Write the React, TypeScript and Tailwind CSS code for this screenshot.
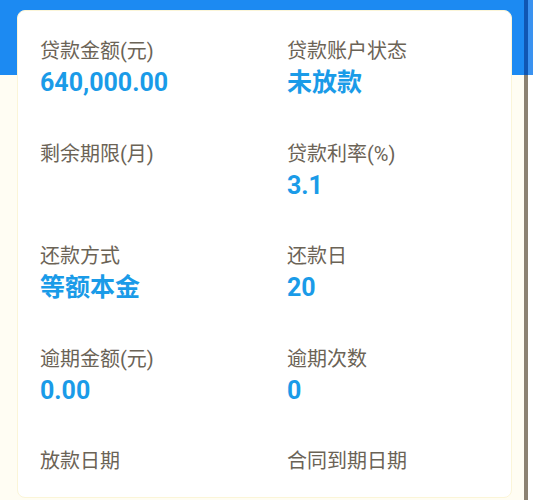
const rows: [string, string, string, string][] = [
  ["贷款金额(元)", "640,000.00", "贷款账户状态", "未放款"],
  ["剩余期限(月)", "", "贷款利率(%)", "3.1"],
  ["还款方式", "等额本金", "还款日", "20"],
  ["逾期金额(元)", "0.00", "逾期次数", "0"],
  ["放款日期", "", "合同到期日期", ""],
];

function Field({ label, value }: { label: string; value: string }) {
  return (
    <div className="flex flex-col">
      <span className="text-[20px] leading-[28px] text-[#6b6356]">{label}</span>
      {value && (
        <span className="mt-[2px] text-[25px] leading-[32px] font-bold text-[#1a9be8]">
          {value}
        </span>
      )}
    </div>
  );
}

export default function App() {
  return (
    <div
      className="flex w-[533px] h-[500px] overflow-hidden bg-white"
      style={{ fontFamily: 'Roboto, "Noto Sans CJK SC", sans-serif' }}
    >
      <div className="flex flex-col w-[524px] bg-[#fffdf3]">
        <div className="h-[75px] shrink-0 bg-[#1c8af2]" />
        <div className="-mt-[65px] ml-[17px] w-[495px] rounded-[8px] border border-[#fbf5d8] bg-white pt-[26px] pb-[22px] pl-[22px]">
          <div className="grid grid-cols-[247px_1fr] gap-y-[40.5px]">
            {rows.map(([l1, v1, l2, v2]) => (
              <div key={l1} className="contents">
                <Field label={l1} value={v1} />
                <Field label={l2} value={v2} />
              </div>
            ))}
          </div>
        </div>
      </div>
      <div className="flex flex-col w-[4px]">
        <div className="h-[75px] bg-[#0f56b3]" />
        <div className="flex-1 bg-[#8c8272]" />
      </div>
      <div className="flex flex-col flex-1">
        <div className="h-[75px] bg-[#3a92f0]" />
        <div className="flex-1 bg-white" />
      </div>
    </div>
  );
}
